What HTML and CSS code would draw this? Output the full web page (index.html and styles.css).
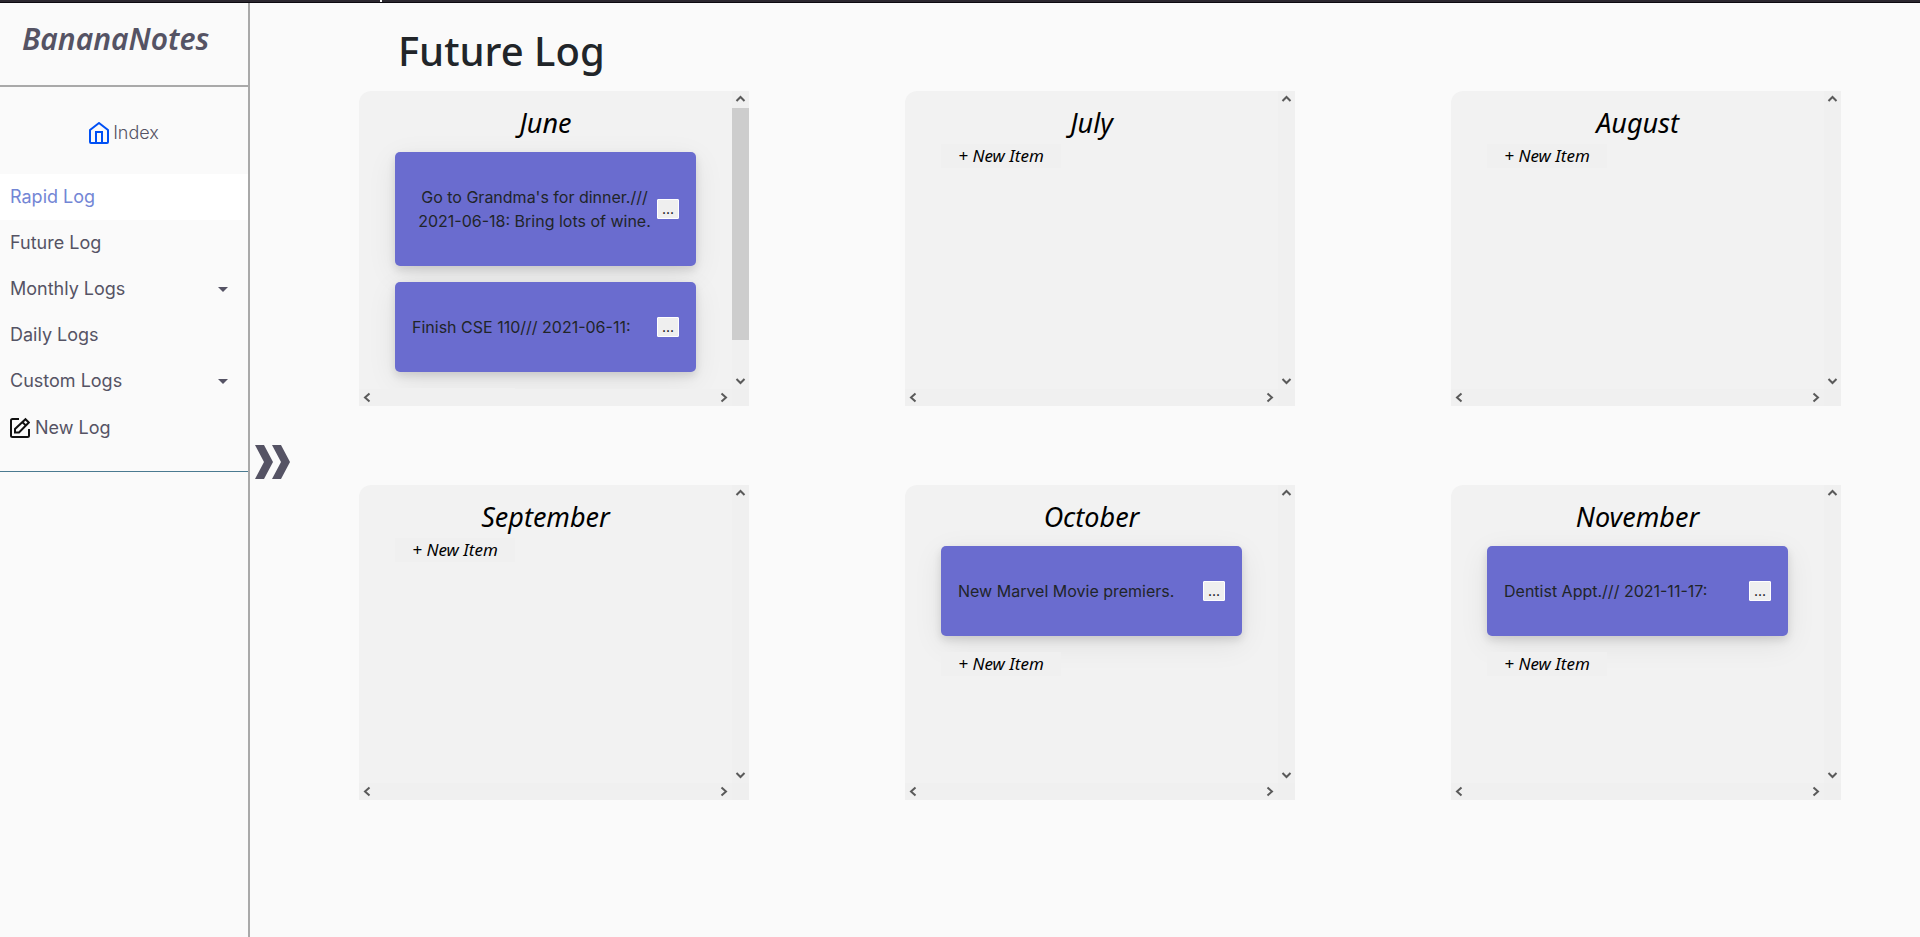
FILE: index.html
```html
<!DOCTYPE html>
<html lang="en">
<head>
<meta charset="utf-8">
<title>BananaNotes - Future Log</title>
<link rel="stylesheet" href="styles.css">
</head>
<body>
<div class="topbar"><span class="topbar-left"></span><span class="topbar-right"></span></div>
<div class="layout">
  <nav class="sidebar">
    <h2 class="brand">BananaNotes</h2>
    <a class="index-link" href="#index">
      <svg class="icon" viewBox="0 0 20 22" fill="none" stroke="#0050f5" stroke-width="2" stroke-linejoin="round"><path d="M1 8 10 1l9 7v12a1 1 0 0 1-1 1H2a1 1 0 0 1-1-1z"/><path d="M7 21V10h6v11" stroke-linejoin="miter"/></svg>
      Index
    </a>
    <ul class="menu">
      <li><a class="menu-link menu-link-active" href="#rapid">Rapid Log</a></li>
      <li><a class="menu-link" href="#future">Future Log</a></li>
      <li><a class="menu-link" href="#monthly">Monthly Logs <span class="caret"></span></a></li>
      <li><a class="menu-link" href="#daily">Daily Logs</a></li>
      <li><a class="menu-link" href="#custom">Custom Logs <span class="caret"></span></a></li>
      <li><a class="menu-link menu-link-new" href="#new">
        <svg class="icon" viewBox="0 0 20 22" fill="none" stroke="#111" stroke-width="2"><path d="M9 2H2.500A1.500 1.500 0 0 0 1 3.500v15A1.500 1.500 0 0 0 2.500 20h15a1.500 1.500 0 0 0 1.500-1.500V12"/><path d="M15.500 2.200 18.800 5.500 9 15.500H5V12z"/><path d="M12.500 5.200 15.700 8.400"/></svg>
        New Log</a></li>
    </ul>
  </nav>
  <div class="toggle-rail">
    <button class="toggle" aria-label="Toggle sidebar">
      <svg viewBox="0 0 35 34" width="35" height="34" fill="#555364"><path d="M0 0h9l9 17-9 17H0l9-17z"/><path d="M17 0h9l9 17-9 17h-9l9-17z"/></svg>
    </button>
  </div>
  <main class="content">
    <h1 class="title">Future Log</h1>
    <div class="months" id="months"></div>
  </main>
</div>
<script src="app.js"></script>
</body>
</html>
```
FILE: app.js
```js
const months = [
  { name: "June", thumb: true, items: ["Go to Grandma's for dinner./// 2021-06-18: Bring lots of wine.", "Finish CSE 110/// 2021-06-11:"] },
  { name: "July", items: [] },
  { name: "August", items: [] },
  { name: "September", items: [] },
  { name: "October", items: ["New Marvel Movie premiers."] },
  { name: "November", items: ["Dentist Appt./// 2021-11-17:"] }
];
const arrow = (d) => `<svg class="arrow" viewBox="0 0 17 17" fill="none" stroke="#5a5a5a" stroke-width="2"><path d="${d}"/></svg>`;
const card = (text) => `<article class="card"><p class="card-text">${text}</p><button class="more">...</button></article>`;
document.getElementById("months").innerHTML = months.map((m) => `
  <section class="month">
    <div class="month-body">
      <h2 class="month-name">${m.name}</h2>
      ${m.items.map(card).join("")}
      <button class="new-item">+ New Item</button>
    </div>
    <div class="bar bar-v">${arrow("M4.500 10 8.500 6 12.500 10")}<span class="${m.thumb ? "thumb" : "track"}"></span>${arrow("M4.500 7 8.500 11 12.500 7")}</div>
    <div class="bar">${arrow("M10.500 4.500 6 8.500 10.500 12.500")}${arrow("M6.500 4.500 11 8.500 6.500 12.500")}</div>
    <span class="corner"></span>
  </section>`).join("");
```
FILE: styles.css
```css
* { box-sizing: border-box; }
body {
  margin: 0;
  min-height: 100vh;
  display: flex;
  flex-direction: column;
  background: #fafafa;
  color: #212529;
  font-family: Inter, "Open Sans", sans-serif;
  font-size: 16px;
  line-height: 24px;
}
a { color: inherit; text-decoration: none; }
button { font: inherit; cursor: pointer; }

.topbar { display: flex; gap: 2px; height: 3px; border-bottom: 1px solid #0c0a10; }
.topbar-left { width: 380px; background: #2b282f; }
.topbar-right { flex: 1; background: #2b282f; }

.layout { flex: 1; display: flex; }

.sidebar {
  width: 250px;
  flex: none;
  border-right: 2px solid #a9a9a9;
  color: #555364;
  font-size: 18px;
}
.brand {
  margin: 0;
  padding: 16px 22px 26px;
  border-bottom: 2px solid #a9a9a9;
  font-family: "Noto Sans", sans-serif;
  font-size: 30px;
  font-weight: 600;
  font-style: italic;
  line-height: 40px;
}
.index-link {
  display: flex;
  align-items: center;
  justify-content: center;
  gap: 4px;
  height: 87px;
  padding-top: 4px;
  font-weight: 300;
}
.icon { width: 20px; height: 22px; flex: none; }
.menu {
  margin: 0;
  padding: 0 0 20px;
  list-style: none;
  border-bottom: 1px solid #4a7a90;
}
.menu-link {
  display: flex;
  align-items: center;
  justify-content: space-between;
  padding: 11px 20px 11px 10px;
}
.menu-link-new {
  justify-content: flex-start;
  gap: 5px;
  padding-top: 12px;
}
.menu-link-active { background: #fff; color: #7386d5; }
.caret {
  border: 5px solid transparent;
  border-top-color: #555364;
  border-bottom: 0;
}

.toggle-rail {
  width: 45px;
  flex: none;
  display: flex;
  align-items: center;
  padding: 0 0 16px 5px;
}
.toggle { display: flex; padding: 0; border: 0; background: none; }

.content { flex: 1; padding: 24px 79px 24px 64px; }
.title {
  margin: 0 0 16px;
  padding-left: 39px;
  font-family: "Noto Sans", sans-serif;
  font-size: 40px;
  font-weight: 500;
  line-height: 48px;
}
.months {
  display: grid;
  grid-template-columns: repeat(3, 1fr);
  gap: 79px 156px;
}
.month {
  display: grid;
  grid-template-columns: minmax(0, 1fr) 17px;
  grid-template-rows: 298px 17px;
  background: #f2f2f2;
  border-top-left-radius: 12px;
}
.month-body {
  display: flex;
  flex-direction: column;
  overflow: auto;
  scrollbar-width: none;
  padding: 12px 36px 0;
}
.month-name {
  flex: none;
  margin: 0 0 1px;
  color: #000;
  font-family: "Noto Sans", sans-serif;
  font-size: 27px;
  font-weight: 400;
  font-style: italic;
  line-height: 40px;
  text-align: center;
}
.card {
  flex: none;
  display: flex;
  align-items: center;
  justify-content: space-between;
  margin: 8px 0;
  padding: 33px 17px;
  border-radius: 5px;
  background: #6a6ccf;
  box-shadow: 0 4px 8px rgba(0, 0, 0, 0.12), 0 8px 30px rgba(0, 0, 0, 0.08);
}
.card-text { margin: 0; text-align: center; }
.more {
  flex: none;
  width: 22px;
  height: 20px;
  padding: 0;
  border: 1px solid #fff;
  border-radius: 1px;
  background: #efefef;
  color: #000;
  font-size: 14px;
  line-height: 16px;
}
.new-item {
  flex: none;
  width: 120px;
  height: 24px;
  padding: 0;
  border: 0;
  background: #f0f0f0;
  color: #000;
  font-family: "Noto Sans", sans-serif;
  font-size: 17px;
  font-style: italic;
}
.card + .new-item { margin-top: 8px; }

.bar { display: flex; justify-content: space-between; background: #f0f0f0; }
.bar-v { flex-direction: column; }
.arrow { width: 17px; height: 17px; flex: none; }
.thumb { height: 232px; margin-bottom: auto; background: #cdcdcd; }
.corner { background: #efefef; }
```
